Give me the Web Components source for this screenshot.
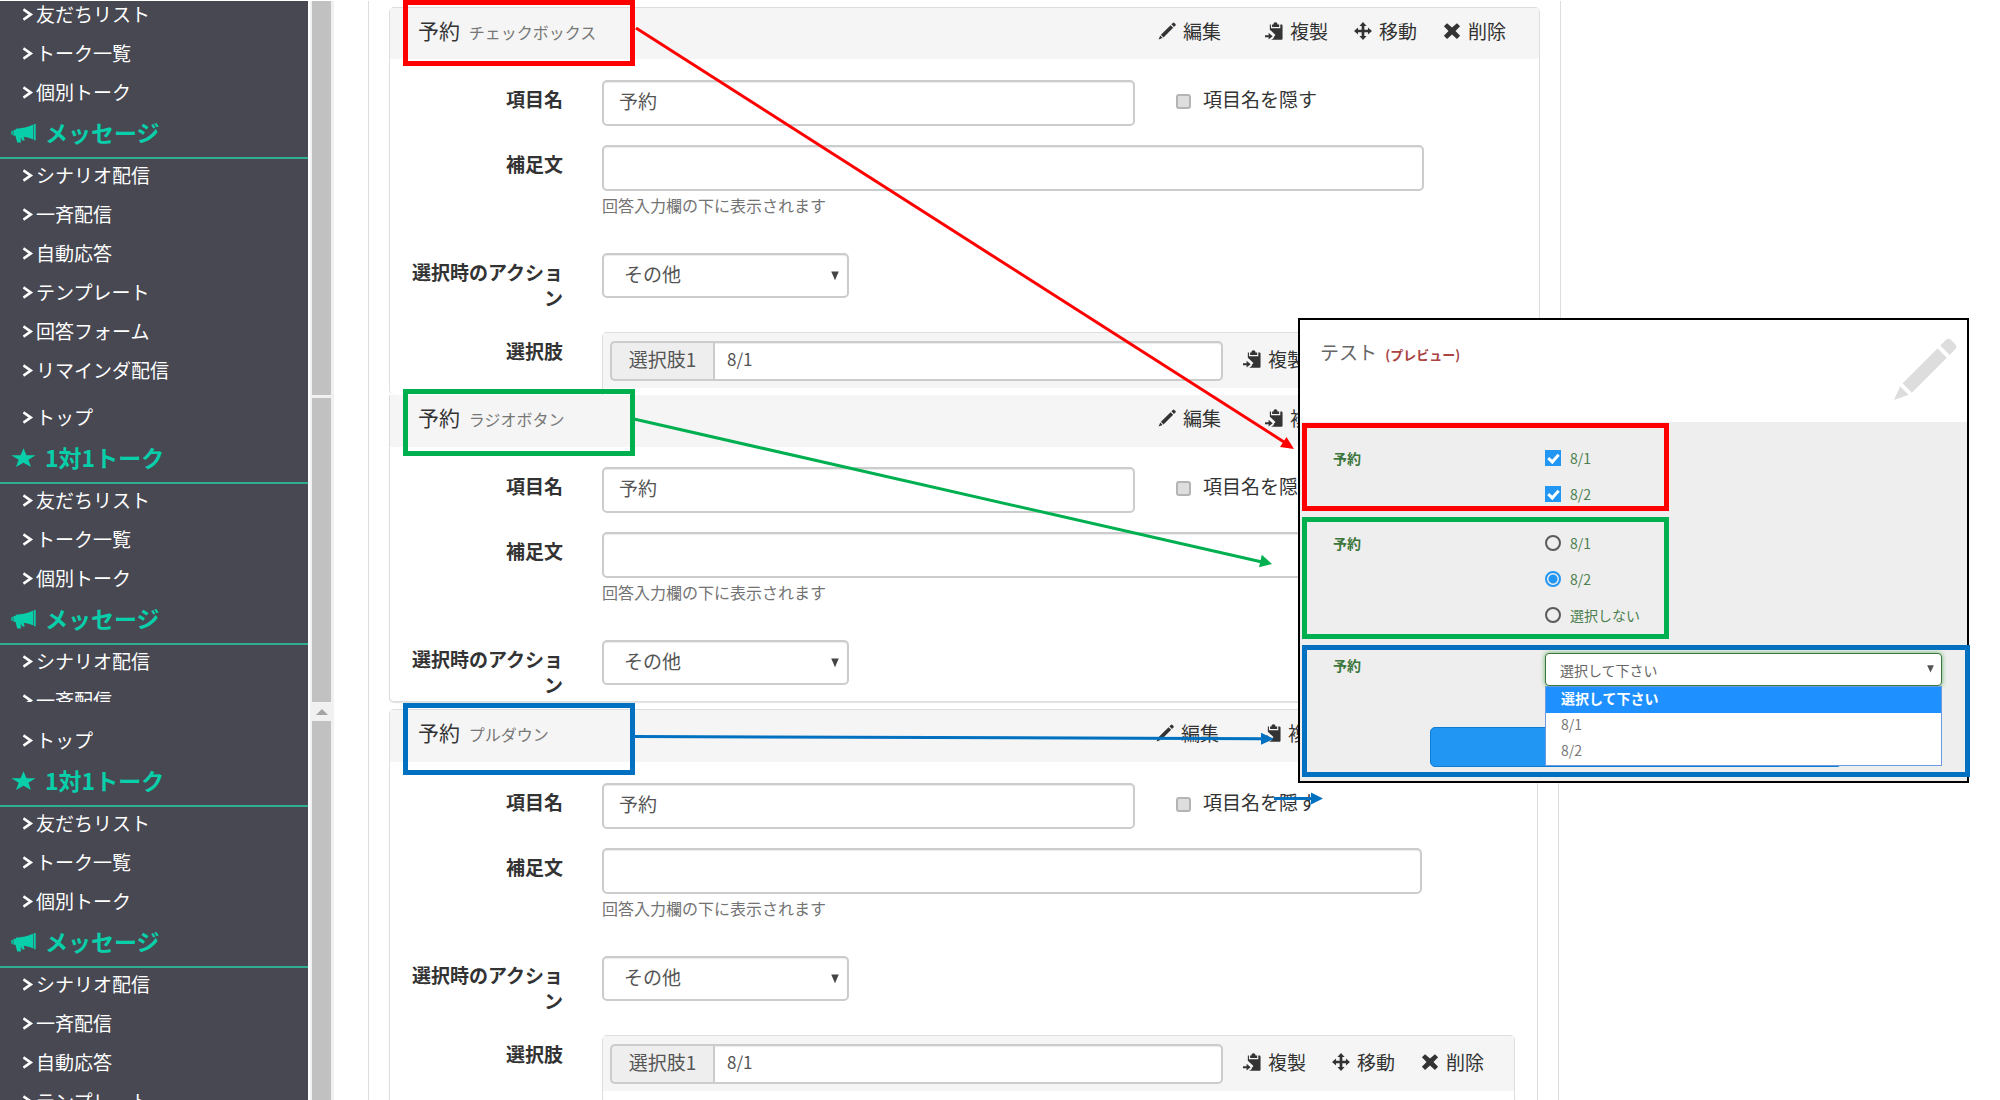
<!DOCTYPE html>
<html lang="ja">
<head>
<meta charset="utf-8">
<title>回答フォーム</title>
<style>
html,body{margin:0;height:100%}
body{font-family:"Noto Sans CJK JP","Liberation Sans",sans-serif;color:#333;background:#fff;overflow:hidden}
form-page{height:100vh}
</style>
</head>
<body>
<form-page></form-page>
<script>
const ICONS = {
  pencil: '<path d="M13.2.8a1 1 0 0 1 1.4 0l.9.9a1 1 0 0 1 0 1.4l-1.3 1.3-2.3-2.3zM11.2 2.8l2.3 2.3-8.6 8.6-2.3-2.3zM2 12.1 4.1 14.2.5 15.5z"/>',
  paste: '<path d="M7.500 2.200C7.500.900 8.300.200 9.300.200s1.800.700 1.800 2h1.500v2.300H6.300V2.200zM4.300 2.300h1v3.200h8.300V2.300h.900c.700 0 1.100.400 1.100 1.100v11.200c0 .700-.400 1.100-1.100 1.100H5.300c1.500-.300 2.600-1.300 2.800-2.800L9.300 11.600 4.300 6.800zM0 11.700h3.200V9.600l3.600 3-3.600 3v-2H0z"/>',
  move: '<path d="M8 0l3.200 3.600H9.200v3.200h3.200V4.800L16 8l-3.600 3.200V9.200H9.200v3.200h2L8 16l-3.200-3.600h2V9.200H3.600v2L0 8l3.600-3.200v2h3.200V3.600h-2z"/>',
  remove: '<path d="M3.600 1 8 4.900 12.400 1 15.200 3.800 11.100 8 15.200 12.200 12.400 15 8 11.100 3.600 15 .8 12.200 4.900 8 .8 3.800z"/>',
  chevron: '<path d="M3 2.500 12 8l-9 5.500" fill="none" stroke="currentColor" stroke-width="3"/>',
  star: '<path d="M8 .2l1.900 5.600h5.900l-4.700 3.600 1.700 5.800L8 11.800l-4.800 3.400 1.700-5.800L.2 5.800h5.900z"/>',
  horn: '<path d="M14.700.8h1.100v13h-1.100zM3 4.500C7 4.400 11 3.300 14.300 1.200v12c-2-1.300-4-2-6.200-2.300L8.800 14H7.200l-1-2.500.2 4.100H4L3 11zM.2 6.300h.9v3H.2zM1.500 5.500h1.600v4.600H1.500z"/>',
  down: '<path d="M2 2h12L8 15z"/>'
};
let uid = 0;

function define(name, render) {
  customElements.define(name, class extends HTMLElement {
    constructor() { super(); this.attachShadow({mode: 'open'}); }
    connectedCallback() {
      if (this.shadowRoot.childNodes.length) return;
      const t = document.createElement('template');
      t.innerHTML = render(this);
      this.shadowRoot.append(t.content.cloneNode(true));
    }
  });
}

define('ui-icon', el => `
<style>:host{display:inline-block;flex:none;width:18px;height:18px}svg{display:block;width:100%;height:100%;fill:currentColor}</style>
<svg viewBox="0 0 16 16" preserveAspectRatio="none" aria-hidden="true">${ICONS[el.getAttribute('name')]}</svg>`);

define('nav-link', () => `
<style>
:host{display:block}
a{display:flex;align-items:center;gap:2px;padding-left:21px;color:#fff;text-decoration:none;font-size:19px;line-height:32px;white-space:nowrap}
ui-icon{width:13px;height:15px}
</style>
<a href="#"><ui-icon name="chevron"></ui-icon><span><slot></slot></span></a>`);

define('nav-heading', el => `
<style>
:host{display:block}
h2{display:flex;align-items:center;gap:9px;margin:0;padding-left:11px;border-bottom:2px solid #2fae92;color:#08cfaa;font-size:23px;font-weight:700;line-height:49px;white-space:nowrap}
ui-icon{width:25px;height:20px}
</style>
<h2><ui-icon name="${el.getAttribute('icon')}"></ui-icon><slot></slot></h2>`);

define('nav-list', () => `<style>:host{display:flex;flex-direction:column;gap:7px}</style><slot></slot>`);

define('side-nav', () => `
<style>
:host{display:block;width:308px;flex:none;height:0;min-height:100%;overflow:hidden;background:#474852}
nav{padding-top:var(--nav-top,0)}
</style>
<nav><slot></slot></nav>`);

define('scroll-track', el => `
<style>
:host{display:flex;flex-direction:column;box-sizing:border-box;width:24px;flex:none;margin-left:2px;padding:0 3px 0 2px;background:#f1f1f1}
.up{display:flex;justify-content:center;align-items:center;height:19px}
.up i{border:6px solid transparent;border-top:0;border-bottom:6px solid #a3a3a3}
.thumb{flex:1;background:#c1c1c1}
:host([gap]) .thumb{margin-top:3px}
</style>
${el.hasAttribute('arrow') ? '<div class="up"><i></i></div>' : ''}<div class="thumb"></div>`);

define('tool-button', el => `
<style>
:host{display:block}
button{display:flex;align-items:center;gap:7px;margin:0;padding:0;border:0;background:none;color:#333;font:inherit;font-size:19px;line-height:28px;white-space:nowrap}
</style>
<button type="button"><ui-icon name="${el.getAttribute('icon')}"></ui-icon><slot></slot></button>`);

define('item-tools', el => `
<style>:host{display:flex;gap:26px}.edit{margin-right:18px}</style>
${el.hasAttribute('editable') ? '<tool-button class="edit" icon="pencil">編集</tool-button>' : ''}
<tool-button icon="paste">複製</tool-button>
<tool-button icon="move">移動</tool-button>
<tool-button icon="remove">削除</tool-button>`);

define('field-panel', el => {
  const n = ++uid;
  const choices = el.hasAttribute('choices') ? `
  <div class="row choices"><label for="opt${n}">選択肢</label>
    <div class="well"><div class="bar">
      <div class="group"><span class="addon">選択肢1</span><input id="opt${n}" type="text" value="8/1"></div>
      <item-tools></item-tools>
    </div></div>
  </div>` : '';
  return `
<style>
:host{display:block;border:1px solid #ddd;border-width:var(--edges,1px);border-radius:5px;background:#fff}
:host([closed]){box-shadow:0 1px 1px rgba(0,0,0,.12)}
header{display:flex;align-items:center;justify-content:space-between;height:var(--head,52px);padding:0 33px 0 28px;background:#f5f5f5;box-sizing:border-box}
header item-tools{padding-bottom:6px}
h3{margin:0;padding-bottom:6px;font-size:21px;font-weight:400;line-height:28px;white-space:nowrap}
small{font-size:16px;color:#777;margin-left:4px}
.body{padding:var(--body,21px) 22px 0 19px}
:host([closed]) .body{padding-bottom:3px}
.row{display:grid;grid-template-columns:154px minmax(0,1fr);column-gap:39px;align-items:start}
.row>label{padding-top:6px;font-size:19px;font-weight:700;line-height:26px;text-align:right;word-break:break-all}
.note{margin-top:19px}.action{margin-top:37px}.choices{margin-top:21px}
input[type=text],select{box-sizing:border-box;height:46px;border:2px solid #ccc;border-radius:5px;background:#fff;color:#555;font:inherit;font-size:19px;padding:0 15px 5px;margin:0;box-shadow:inset 0 1px 1px rgba(0,0,0,.08)}
.name{display:flex;align-items:flex-start}
.name input[type=text]{width:533px;min-width:0}
.hide{display:flex;align-items:center;gap:12px;margin-left:41px;padding-top:6px;font-size:19px;line-height:26px;white-space:nowrap}
.hide input{appearance:none;width:15px;height:15px;margin:4px 0 0;border:2px solid #b4b4b4;border-radius:3px;background:#dedede;box-sizing:border-box}
.text{display:block;width:calc(100% - 93px)}
.hint{margin:4px 0 0;font-size:16px;line-height:21px;color:#737373}
.pick{position:relative;width:247px}
.pick select{display:block;width:100%;height:45px;appearance:none;padding-left:20px}
.pick ui-icon{position:absolute;right:9px;top:17px;width:10px;height:11px;color:#444;pointer-events:none}
.well{border:1px solid #ddd;border-bottom:0;border-radius:5px 5px 0 0;min-height:var(--well,62px);background:#fff}
.bar{display:flex;align-items:center;gap:20px;height:55px;padding:0 7px;background:#f5f5f5}
.bar item-tools{padding-bottom:4px}
.group{display:flex;width:613px;min-width:0}
.addon{flex:none;box-sizing:border-box;width:103px;height:40px;border:2px solid #ccc;border-right:0;border-radius:5px 0 0 5px;background:#eee;color:#555;font-size:19px;line-height:32px;text-align:center}
.group input[type=text]{flex:1;min-width:0;height:40px;border-radius:0 5px 5px 0;padding:0 12px 4px;font-size:17px}
</style>
<header><h3>予約 <small><slot></slot></small></h3><item-tools editable></item-tools></header>
<div class="body">
  <div class="row"><label for="name${n}">項目名</label>
    <div class="name"><input id="name${n}" type="text" value="予約"><label class="hide"><input type="checkbox">項目名を隠す</label></div></div>
  <div class="row note"><label for="note${n}">補足文</label>
    <div><input class="text" id="note${n}" type="text"><p class="hint">回答入力欄の下に表示されます</p></div></div>
  <div class="row action"><label for="act${n}">選択時のアクション</label>
    <div class="pick"><select id="act${n}"><option>その他</option></select><ui-icon name="down"></ui-icon></div></div>
  ${choices}
</div>`;
});

define('screen-strip', () => `
<style>
:host{display:flex;min-height:0}
main{flex:1;min-width:0;box-sizing:border-box;margin:0 var(--outer,439px) 0 34px;padding:var(--top,0) 20px 0;border:solid #ddd;border-width:0 1px}
</style>
<slot name="nav"></slot><slot name="bar"></slot><main><slot></slot></main>`);

define('preview-window', () => `
<style>
:host{display:block;box-sizing:border-box;border:2px solid #000;background:#eee;padding-bottom:4px}
header{display:flex;justify-content:space-between;height:102px;padding:0 10px 0 20px;background:#fff;box-sizing:border-box}
h2{margin:18px 0 0;font-size:19px;font-weight:400;line-height:28px;color:#666}
h2 small{font-size:13px;font-weight:700;color:#a94442;margin-left:4px}
header ui-icon{width:65px;height:65px;margin-top:17px;color:#ddd}
fieldset{box-sizing:border-box;min-width:0;margin:6px 0 0 2px;padding:0 0 0 26px;border:5px solid;font-size:14px}
.row{display:grid;grid-template-columns:212px minmax(0,1fr);align-items:start}
.title{font-weight:700;line-height:20px;color:#3c763d}
.opts{display:flex;flex-direction:column;gap:16px}
.opts label{display:flex;align-items:center;gap:9px;color:#4c7f4d;line-height:20px}
.check{width:367px;height:88px;margin-top:1px;padding-top:20px;border-color:#f00}
.radio{width:367px;height:122px;padding-top:11px;border-color:#00b050}
.drop{height:132px;margin-right:-3px;padding:3px 23px 0 26px;border-color:#0070c0}
.drop .title{padding-top:2px}
input{appearance:none;box-sizing:border-box;margin:0;width:16px;height:16px}
input[type=checkbox]{background:#2196f3;display:grid;place-items:center}
input[type=checkbox]::after{content:"";width:4px;height:8px;margin-bottom:2px;border:solid #fff;border-width:0 3px 3px 0;transform:rotate(42deg)}
input[type=radio]{border:2px solid #5a5a5a;border-radius:50%}
input[type=radio]:checked{border-color:#2196f3;background:radial-gradient(circle,#2196f3 0 4px,#eee 5px)}
.pick{position:relative;z-index:1}
select{appearance:none;display:block;box-sizing:border-box;width:100%;height:33px;margin:0;padding:0 14px;border:1px solid #3c763d;border-radius:4px;background:#fff;color:#666;font:inherit;font-size:14px;box-shadow:0 0 5px #67b168}
.pick ui-icon{position:absolute;right:7px;top:11px;width:9px;height:9px;color:#555}
ul{position:absolute;left:0;right:0;top:33px;margin:0;padding:0;list-style:none;border:1px solid #6d9ae0;background:#fff}
li{padding:0 0 3px 15px;line-height:23px;color:#777}
li[aria-selected=true]{background:#1e90ff;color:#fff;font-weight:700}
button{display:block;box-sizing:border-box;height:40px;min-width:412px;margin:41px 100px 0 97px;padding:0;border:1px solid #0c7cd5;border-radius:5px;background:#2196f3}
</style>
<header><h2>テスト <small>(プレビュー)</small></h2><ui-icon name="pencil"></ui-icon></header>
<fieldset class="check"><div class="row"><span class="title">予約</span><div class="opts">
  <label><input type="checkbox" checked>8/1</label><label><input type="checkbox" checked>8/2</label></div></div></fieldset>
<fieldset class="radio"><div class="row"><span class="title">予約</span><div class="opts">
  <label><input type="radio" name="r">8/1</label><label><input type="radio" name="r" checked>8/2</label><label><input type="radio" name="r">選択しない</label></div></div></fieldset>
<fieldset class="drop"><div class="row"><label class="title" for="day">予約</label>
  <div class="pick"><select id="day"><option>選択して下さい</option></select><ui-icon name="down"></ui-icon>
  <ul role="listbox"><li role="option" aria-selected="true">選択して下さい</li><li role="option">8/1</li><li role="option">8/2</li></ul></div></div>
  <button type="button"></button></fieldset>`);

define('callout-layer', () => `
<style>:host{position:absolute;left:0;top:0;pointer-events:none}svg{display:block}</style>
<svg width="1400" height="1100" viewBox="0 0 1400 1100" fill="none" stroke-width="3" aria-hidden="true">
<g stroke-width="5"><path stroke="#f00" d="M405.500 2.500h227v61h-227z"/><path stroke="#00b050" d="M405.500 391.500h227v62h-227z"/><path stroke="#0070c0" d="M405.500 705.500h227v67h-227z"/></g>
<path stroke="#f00" d="M636 28 1284 442"/><path fill="#f00" d="M1294 449l-14-2 6.500-10z"/>
<path stroke="#00b050" d="M634 419 1262 562"/><path fill="#00b050" d="M1272 564l-13 3.200 2.800-12.400z"/>
<path stroke="#0070c0" d="M634 736.500 1262 738.700M1274 798.500h38"/><path fill="#0070c0" d="M1274 738.800l-13 6v-12zM1323 798.500l-12 6v-12z"/>
</svg>`);

const link = t => `<nav-link>${t}</nav-link>`;
const list = (...a) => `<nav-list>${a.map(link).join('')}</nav-list>`;
const TALK = ['友だちリスト', 'トーク一覧', '個別トーク'];
const MSG = ['シナリオ配信', '一斉配信', '自動応答', 'テンプレート', '回答フォーム', 'リマインダ配信'];
const msg = n => '<nav-heading icon="horn">メッセージ</nav-heading>' + list(...MSG.slice(0, n));
const full = n => list('トップ') + '<nav-heading icon="star">1対1トーク</nav-heading>' + list(...TALK) + msg(n);

define('form-page', () => `
<style>
:host{display:flex;flex-direction:column;position:relative;box-sizing:border-box;padding-top:1px;overflow:hidden}
screen-strip{flex:none}
.a{--top:6px}
.a side-nav nav-list:first-child{margin-top:-3px}
.a field-panel{--edges:1px 1px 0;--head:51px}
.b{--nav-top:6px}
.b field-panel{--edges:0 1px 1px;--body:20px;border-radius:0 0 5px 5px}
.c{flex:1;--nav-top:22px;--top:7px;--outer:441px}
.c field-panel{--well:80px}
preview-window{position:absolute;left:1298px;top:318px;width:671px}
</style>
<screen-strip class="a"><side-nav slot="nav">${list(...TALK)}${msg(6)}</side-nav><scroll-track slot="bar"></scroll-track>
  <field-panel choices>チェックボックス</field-panel></screen-strip>
<screen-strip class="b"><side-nav slot="nav">${full(2)}</side-nav><scroll-track slot="bar" gap></scroll-track>
  <field-panel closed>ラジオボタン</field-panel></screen-strip>
<screen-strip class="c"><side-nav slot="nav">${full(4)}</side-nav><scroll-track slot="bar" arrow></scroll-track>
  <field-panel choices>プルダウン</field-panel></screen-strip>
<callout-layer></callout-layer>
<preview-window></preview-window>`);
</script>
</body>
</html>
